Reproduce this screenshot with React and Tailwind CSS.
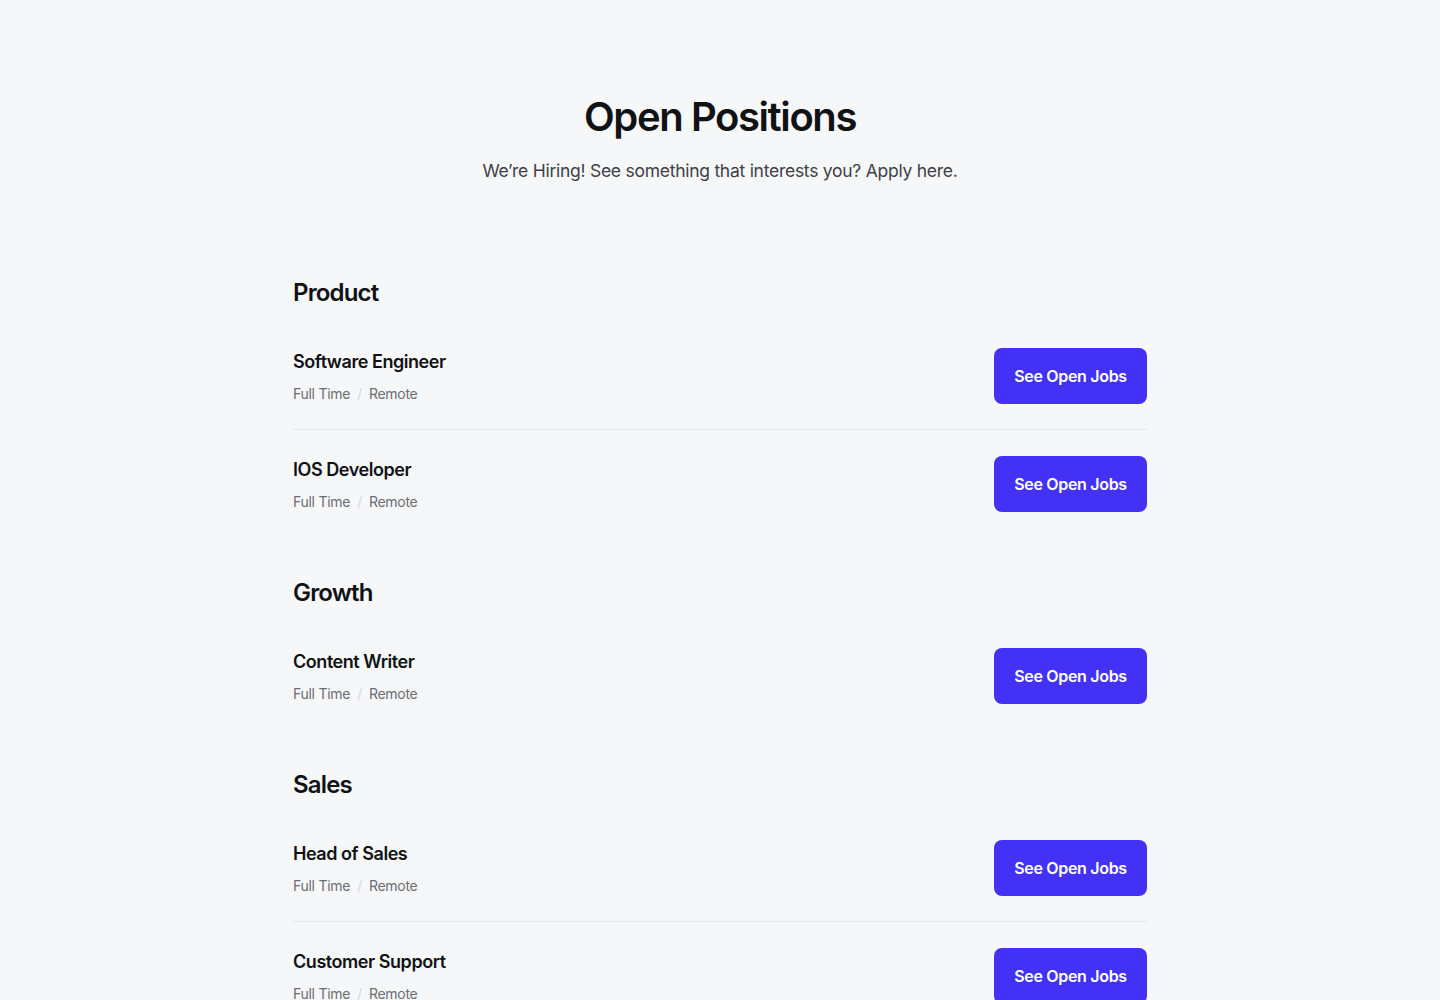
import React from "react";

const sections = [
  { name: "Product", jobs: ["Software Engineer", "IOS Developer"] },
  { name: "Growth", jobs: ["Content Writer"] },
  { name: "Sales", jobs: ["Head of Sales", "Customer Support"] },
];

function Row({ title, last }) {
  return (
    <div
      className={
        "flex items-center justify-between pt-[26px] pb-[25px] " +
        (last ? "" : "border-b border-[#e4e5e9]")
      }
    >
      <div className="flex flex-col">
        <div className="text-[18px] leading-[28px] font-semibold text-[#111214] tracking-[-0.025em]">
          {title}
        </div>
        <div className="mt-[8px] flex items-center text-[14px] leading-[20px] tracking-[-0.02em] text-[#6b6e75]">
          <span>Full Time</span>
          <span className="mx-[7px] text-[#d4d6db]">/</span>
          <span>Remote</span>
        </div>
      </div>
      <button className="h-[56px] w-[153px] rounded-[8px] bg-[#4332f5] text-[16px] font-semibold tracking-[-0.02em] text-white">
        See Open Jobs
      </button>
    </div>
  );
}

export default function App() {
  return (
    <div
      className="min-h-screen bg-[#f6f7f9] pb-10"
      style={{ fontFamily: "Inter, 'Noto Sans', sans-serif" }}
    >
      <div className="mx-auto w-[854px] pt-[93px]">
        <div className="text-center">
          <h1 className="text-[40px] leading-[48px] font-semibold tracking-[-0.035em] text-[#111214]">
            Open Positions
          </h1>
          <p className="mt-[16px] text-[17.5px] leading-[28px] tracking-[-0.015em] text-[#3f4046]">
            We’re Hiring! See something that interests you? Apply here.
          </p>
        </div>
        <div className="mt-[92px] flex flex-col gap-[40px]">
          {sections.map((s) => (
            <div key={s.name}>
              <h2 className="mb-[13px] text-[24px] leading-[32px] font-semibold tracking-[-0.035em] text-[#111214]">
                {s.name}
              </h2>
              {s.jobs.map((j, i) => (
                <Row key={j} title={j} last={i === s.jobs.length - 1} />
              ))}
            </div>
          ))}
        </div>
      </div>
    </div>
  );
}
